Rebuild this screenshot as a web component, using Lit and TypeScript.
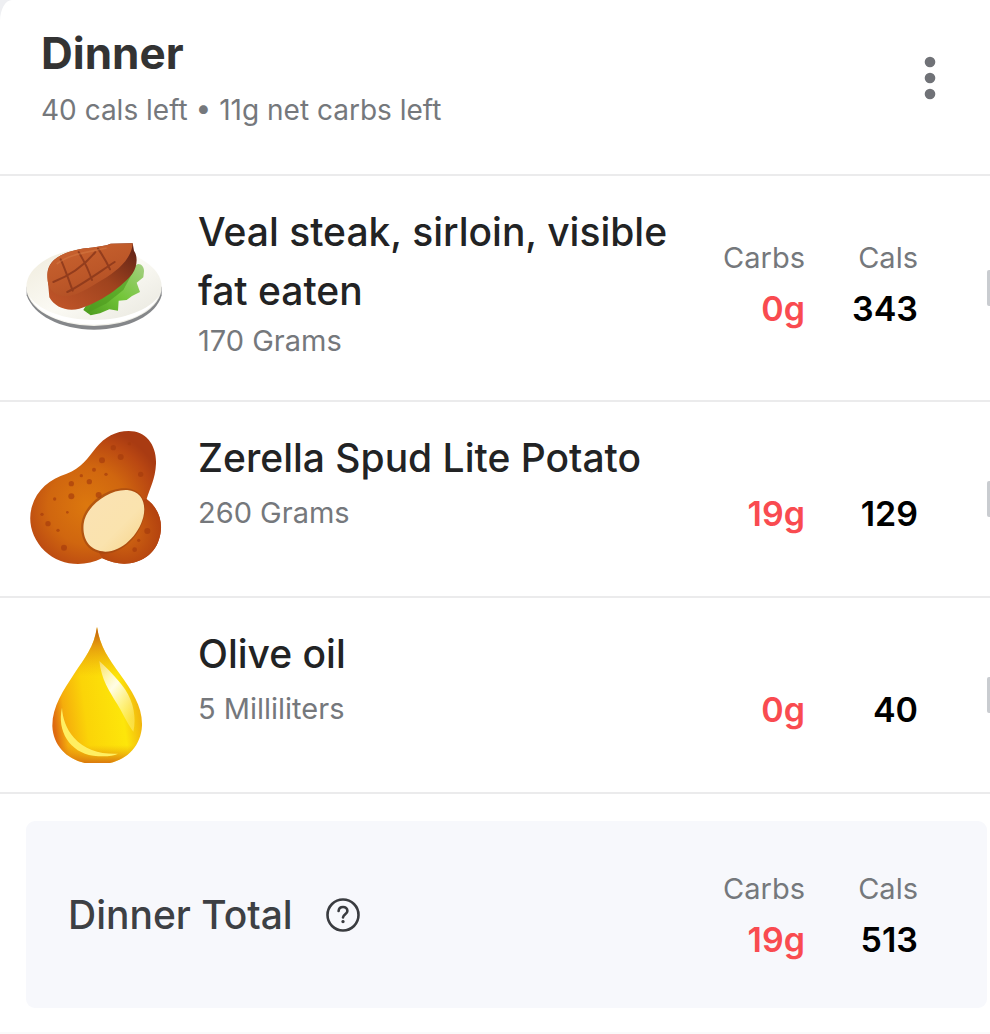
import { LitElement, html, css, svg, nothing } from "lit";
import type { TemplateResult } from "lit";
import { customElement, property, state } from "lit/decorators.js";

interface Food {
  name: string;
  amount: string;
  carbs: string;
  cals: string;
  art: TemplateResult;
}

const steak = html`
  <svg viewBox="48 0 408 408" aria-hidden="true">
    <defs>
      <linearGradient id="plate" x1="0" y1="0" x2="1" y2="1">
        <stop offset="0" stop-color="#efebdc" />
        <stop offset=".5" stop-color="#fbfaf4" />
        <stop offset="1" stop-color="#e6e5dc" />
      </linearGradient>
      <linearGradient id="meat" x1="0" y1="0" x2=".6" y2="1">
        <stop offset="0" stop-color="#cb6430" />
        <stop offset=".6" stop-color="#bd5829" />
        <stop offset="1" stop-color="#b04e24" />
      </linearGradient>
      <linearGradient id="edge" x1="0" y1="1" x2="1" y2="0">
        <stop offset="0" stop-color="#c4572a" />
        <stop offset=".55" stop-color="#9f431e" />
        <stop offset="1" stop-color="#5c2016" />
      </linearGradient>
      <linearGradient id="leaf" x1="0" y1="1" x2="1" y2="0">
        <stop offset="0" stop-color="#4a9a1c" />
        <stop offset=".5" stop-color="#74c63a" />
        <stop offset="1" stop-color="#a5cf82" />
      </linearGradient>
    </defs>
    <path d="M50 226C70 285 150 329 252 329C354 329 440 285 455 226L455 200L50 200Z" fill="#85878a" />
    <ellipse cx="252" cy="201" rx="203" ry="117" fill="url(#plate)" />
    <path d="M56 226C82 280 158 314 252 314C346 314 424 280 448 226C420 270 340 300 252 300C164 300 84 272 56 226Z" fill="#fff" />
    <path d="M384 132C396 132 402 142 402 154L400 172L380 188L390 216L366 228L350 240L326 242L324 272L298 268L270 280L242 286L220 270L260 200Z" fill="url(#leaf)" />
    <path d="M372 150L340 210L290 250L230 280L260 220Z" fill="#4c9a1e" opacity=".6" />
    <path d="M112 165C112 125 145 104 190 92C230 80 270 84 302 71L368 70L372 92C384 108 382 140 368 160C340 198 268 250 208 266C172 276 134 262 118 232Z" fill="url(#edge)" />
    <path d="M112 172C112 125 145 104 190 92C230 80 270 84 302 71L368 70C366 112 328 150 276 180C232 206 196 232 158 228C130 226 112 204 112 172Z" fill="url(#meat)" />
    <g fill="none" stroke="#8c381b" stroke-width="6" stroke-linecap="round" opacity=".85">
      <path d="M152 118C166 148 176 180 188 212M206 96C222 122 236 150 246 180M264 86C278 106 290 126 300 148" />
      <path d="M130 186C176 168 222 138 256 96M172 216C216 194 268 156 314 126" />
    </g>
    <path d="M140 132C180 100 240 96 290 84" fill="none" stroke="#e08a50" stroke-width="5" opacity=".35" />
  </svg>
`;

const potSpots: Array<[number, number, number]> = [
  [310, 96, 8], [332, 124, 9], [276, 134, 9], [392, 176, 8], [238, 198, 8], [184, 204, 8], [184, 242, 9],
  [252, 162, 6], [214, 180, 5], [288, 176, 5], [114, 324, 8], [144, 344, 5], [162, 396, 9], [412, 346, 9],
  [374, 402, 7], [266, 238, 9], [134, 250, 5], [172, 290, 4], [358, 84, 5], [96, 296, 5], [386, 374, 5],
];

const potato = html`
  <svg viewBox="48 46 408 408" aria-hidden="true">
    <defs>
      <radialGradient id="skin" gradientUnits="userSpaceOnUse" cx="232" cy="270" r="235">
        <stop offset="0" stop-color="#dc780e" />
        <stop offset=".5" stop-color="#d0660f" />
        <stop offset=".85" stop-color="#b94712" />
        <stop offset="1" stop-color="#a93b12" />
      </radialGradient>
      <radialGradient id="skin2" cx=".4" cy=".5" r=".6">
        <stop offset="0" stop-color="#d56c12" />
        <stop offset="1" stop-color="#b4430f" />
      </radialGradient>
      <linearGradient id="flesh" x1="0" y1="0" x2="1" y2="1">
        <stop offset="0" stop-color="#fae2b4" />
        <stop offset=".6" stop-color="#fae3ae" />
        <stop offset="1" stop-color="#f7d48a" />
      </linearGradient>
    </defs>
    <path d="M356 46C408 46 440 88 438 144C436 190 420 216 410 250C450 280 462 330 446 374C426 436 350 464 276 428C220 456 150 450 104 406C66 368 52 318 66 272C80 222 120 190 170 174C214 158 234 126 258 96C284 64 318 46 356 46Z" fill="url(#skin)" />
    <path d="M408 250C452 280 462 330 446 374C426 436 350 464 278 428C230 380 330 270 408 250Z" fill="url(#skin2)" />
    ${potSpots.map(([x, y, r]) => svg`<circle cx=${x} cy=${y} r=${r} fill="#a43a0c" opacity=".65" />`)}
    <path d="M350 218C396 222 412 262 402 304C388 362 340 412 284 414C232 412 210 372 214 324C220 270 286 214 350 218Z" fill="#9c4510" opacity=".6" />
    <path d="M352 223C394 226 410 262 400 304C386 358 336 408 286 408C238 406 216 370 221 324C226 276 292 220 352 223Z" fill="url(#flesh)" />
  </svg>
`;

const drop = html`
  <svg viewBox="-12 48 408 408" aria-hidden="true">
    <defs>
      <linearGradient id="oil" x1="0" y1=".6" x2="1" y2=".4">
        <stop offset="0" stop-color="#de6a10" />
        <stop offset=".12" stop-color="#f5ad0c" />
        <stop offset=".35" stop-color="#fbd408" />
        <stop offset=".75" stop-color="#fde60a" />
        <stop offset="1" stop-color="#eda50f" />
      </linearGradient>
      <linearGradient id="tip" x1="0" y1="0" x2="0" y2="1">
        <stop offset="0" stop-color="#b9500f" />
        <stop offset=".14" stop-color="#dc8210" stop-opacity=".7" />
        <stop offset=".36" stop-color="#e89a10" stop-opacity="0" />
        <stop offset=".86" stop-color="#e08a10" stop-opacity="0" />
        <stop offset="1" stop-color="#d4660e" stop-opacity=".9" />
      </linearGradient>
      <linearGradient id="shine" x1="0" y1="0" x2=".6" y2="1">
        <stop offset="0" stop-color="#fff" stop-opacity=".35" />
        <stop offset=".45" stop-color="#fffef0" stop-opacity=".95" />
        <stop offset="1" stop-color="#fff27a" stop-opacity=".5" />
      </linearGradient>
    </defs>
    <path d="M201 48C210 108 236 142 270 190C306 240 338 288 336 344C332 416 276 460 202 460C126 460 70 414 67 346C66 288 100 238 134 186C166 138 192 108 201 48Z" fill="url(#oil)" />
    <path d="M201 48C210 108 236 142 270 190C306 240 338 288 336 344C332 416 276 460 202 460C126 460 70 414 67 346C66 288 100 238 134 186C166 138 192 108 201 48Z" fill="url(#tip)" />
    <path d="M96 290C80 360 120 424 190 434C220 438 248 436 264 428C210 430 164 416 132 380C108 352 98 322 96 290Z" fill="#ffef62" />
    <path d="M208 150C222 164 258 196 286 236C310 272 320 320 310 362C296 344 284 318 262 280C238 240 214 206 208 150Z" fill="url(#shine)" />
  </svg>
`;

const foods: Food[] = [
  { name: "Veal steak, sirloin, visible fat eaten", amount: "170 Grams", carbs: "0g", cals: "343", art: steak },
  { name: "Zerella Spud Lite Potato", amount: "260 Grams", carbs: "19g", cals: "129", art: potato },
  { name: "Olive oil", amount: "5 Milliliters", carbs: "0g", cals: "40", art: drop },
];

@customElement("meal-stats")
class MealStats extends LitElement {
  @property() carbs = "";
  @property() cals = "";
  @property({ type: Boolean }) labelled = false;

  static styles = css`
    :host {
      display: block;
    }
    .stats {
      display: grid;
      grid-template-columns: 105px 113px;
      row-gap: 11px;
      text-align: right;
      line-height: 40px;
    }
    .label {
      font-size: 29px;
      color: #75787c;
    }
    .value {
      font-size: 34px;
      font-weight: 600;
      color: #000;
    }
    .carbs {
      color: #f94b50;
    }
  `;

  render() {
    return html`
      <div class="stats">
        ${this.labelled ? html`<span class="label">Carbs</span><span class="label">Cals</span>` : nothing}
        <span class="value carbs">${this.carbs}</span>
        <span class="value">${this.cals}</span>
      </div>
    `;
  }
}

@customElement("food-row")
class FoodRow extends LitElement {
  @property({ attribute: false }) food!: Food;
  @property({ type: Boolean }) labelled = false;

  static styles = css`
    :host {
      display: block;
    }
    .row {
      display: flex;
      align-items: center;
      min-height: 194px;
      padding-left: 26px;
      border-bottom: 2px solid #ebebec;
    }
    .art {
      flex: none;
      width: 136px;
      height: 136px;
      margin-right: 36px;
    }
    .art svg {
      display: block;
      width: 100%;
      height: 100%;
    }
    .text {
      flex: 1;
      min-width: 0;
      align-self: flex-start;
      padding: 26px 0 39px;
    }
    .name {
      margin: 0;
      min-height: 64px;
      font-size: 39px;
      font-weight: 500;
      line-height: 59px;
      color: #222324;
    }
    .amount {
      margin: 0;
      font-size: 29px;
      line-height: 41px;
      color: #75787c;
    }
    .stats {
      padding-top: 30px;
    }
    .stats.labelled {
      padding: 0 0 9px;
    }
    .handle {
      flex: none;
      width: 3px;
      height: 36px;
      margin-left: 69px;
      border-radius: 2px 0 0 2px;
      background: #c9ccd0;
    }
  `;

  render() {
    const { name, amount, carbs, cals, art } = this.food;
    return html`
      <div class="row">
        <div class="art">${art}</div>
        <div class="text">
          <h2 class="name">${name}</h2>
          <p class="amount">${amount}</p>
        </div>
        <meal-stats
          class="stats ${this.labelled ? "labelled" : ""}"
          .carbs=${carbs}
          .cals=${cals}
          .labelled=${this.labelled}
        ></meal-stats>
        <div class="handle"></div>
      </div>
    `;
  }
}

@customElement("app-root")
class AppRoot extends LitElement {
  @state() private foods = foods;

  static styles = css`
    :host {
      display: block;
      min-height: 100vh;
      background: #eeeff2;
      font-family: Inter, "Liberation Sans", sans-serif;
    }
    .card {
      min-height: 100vh;
      box-sizing: border-box;
      border-radius: 12px 0 0 0 / 21px 0 0 0;
      background: #fff;
      border-bottom: 2px solid #fafafa;
    }
    .head {
      display: flex;
      justify-content: space-between;
      align-items: flex-start;
      padding: 23px 40px 44px 41px;
      border-bottom: 2px solid #ebebec;
    }
    .title {
      margin: 0;
      font-size: 44px;
      font-weight: 700;
      line-height: 60px;
      color: #333;
    }
    .left {
      margin: 7px 0 0;
      font-size: 28px;
      line-height: 40px;
      color: #75787c;
    }
    .icon {
      padding: 0;
      border: 0;
      background: none;
      cursor: pointer;
    }
    .icon svg {
      display: block;
    }
    .menu {
      margin-top: 31px;
    }
    .total {
      display: flex;
      align-items: center;
      margin: 27px 3px 0 26px;
      padding: 48px 69px 48px 42px;
      border-radius: 9px;
      background: #f7f8fc;
    }
    .total-name {
      margin: 0 32px 0 0;
      font-size: 39px;
      font-weight: 500;
      line-height: 60px;
      color: #3d4044;
    }
    .total-stats {
      margin-left: auto;
    }
  `;

  render() {
    return html`
      <main class="card">
        <header class="head">
          <div>
            <h1 class="title">Dinner</h1>
            <p class="left">40 cals left • 11g net carbs left</p>
          </div>
          <button class="icon menu" aria-label="Meal options">
            <svg width="40" height="48" viewBox="0 0 40 48" fill="#707277">
              <circle cx="20" cy="8" r="5.3" />
              <circle cx="20" cy="24" r="5.3" />
              <circle cx="20" cy="40" r="5.3" />
            </svg>
          </button>
        </header>
        ${this.foods.map((f, i) => html`<food-row .food=${f} .labelled=${i === 0}></food-row>`)}
        <section class="total">
          <h2 class="total-name">Dinner Total</h2>
          <button class="icon" aria-label="About the total">
            <svg width="36" height="36" viewBox="0 0 36 36" fill="none" stroke="#3a3c40" stroke-linecap="round" stroke-linejoin="round">
              <circle cx="18" cy="18" r="15.5" stroke-width="2.6" />
              <path d="M13.6 14C13.8 11.5 15.6 10 18 10C20.5 10 22.4 11.6 22.4 13.9C22.4 17 18.2 17.4 18 20.4" stroke-width="2.6" />
              <circle cx="18" cy="24.6" r="1.1" fill="#3a3c40" stroke-width="1.2" />
            </svg>
          </button>
          <meal-stats class="total-stats" .carbs=${"19g"} .cals=${"513"} .labelled=${true}></meal-stats>
        </section>
      </main>
    `;
  }
}
